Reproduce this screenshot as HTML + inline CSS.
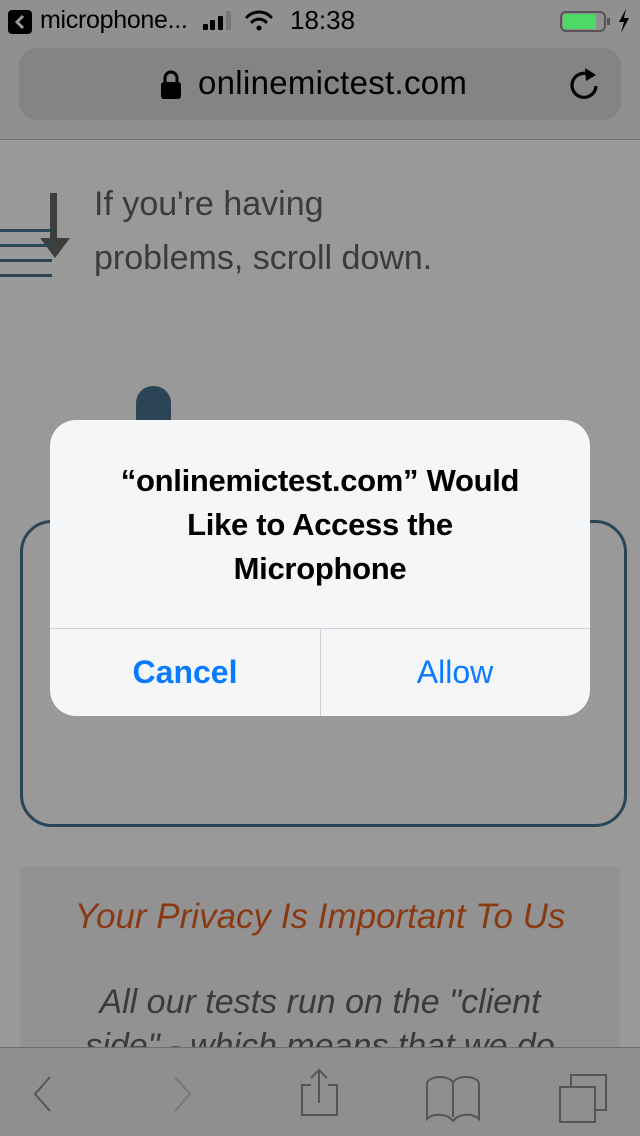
<!DOCTYPE html>
<html><head><meta charset="utf-8"><style>
*{margin:0;padding:0;box-sizing:border-box}
body{width:640px;height:1136px;overflow:hidden;background:#999;font-family:"Liberation Sans",sans-serif;position:relative}
.abs{position:absolute}
</style></head><body>
<div class="abs" style="left:0;top:0;width:640px;height:140px;background:#918f90;border-bottom:1px solid #6e6e6e"></div>
<!-- status bar -->
<div class="abs" style="left:8px;top:10px;width:24px;height:24px;background:#000;border-radius:4px"></div>
<svg class="abs" style="left:8px;top:10px" width="24" height="24"><path d="M15 6 L9 12 L15 18" stroke="#999" stroke-width="3" fill="none"/></svg>
<div class="abs" style="left:40px;top:6px;font-size:25px;color:#000;letter-spacing:-0.3px">microphone...</div>
<div class="abs" style="left:203px;top:24px;width:5px;height:6px;background:#000;border-radius:1px"></div>
<div class="abs" style="left:210px;top:20px;width:5px;height:10px;background:#000;border-radius:1px"></div>
<div class="abs" style="left:218px;top:16px;width:5px;height:14px;background:#000;border-radius:1px"></div>
<div class="abs" style="left:226px;top:11px;width:5px;height:19px;background:#777;border-radius:1px"></div>
<svg class="abs" style="left:244px;top:8px" width="30" height="24" fill="none" stroke="#000" stroke-width="3" stroke-linecap="round"><path d="M3 9 A17 17 0 0 1 27 9"/><path d="M8 14 A10 10 0 0 1 22 14"/><circle cx="15" cy="20" r="2.5" fill="#000" stroke="none"/></svg>
<div class="abs" style="left:290px;top:5px;font-size:26px;color:#000">18:38</div>
<div class="abs" style="left:560px;top:11px;width:46px;height:21px;border:2px solid #555;border-radius:6px"></div>
<div class="abs" style="left:563px;top:14px;width:33px;height:15px;background:#4cd964;border-radius:2px"></div>
<div class="abs" style="left:607px;top:18px;width:3px;height:7px;background:#555"></div>
<svg class="abs" style="left:616px;top:8px" width="16" height="26"><path d="M10 1 L3 14 H8 L5 25 L13 10 H8 Z" fill="#000"/></svg>
<!-- url bar -->
<div class="abs" style="left:19px;top:48px;width:602px;height:72px;background:#858383;border-radius:18px"></div>
<svg class="abs" style="left:158px;top:70px" width="26" height="30"><rect x="3" y="12" width="20" height="17" rx="3" fill="#000"/><path d="M7 13 V8 A6 6 0 0 1 19 8 V13" stroke="#000" stroke-width="3" fill="none"/></svg>
<div class="abs" style="left:198px;top:64px;font-size:33px;color:#000;letter-spacing:0.3px">onlinemictest.com</div>
<svg class="abs" style="left:568px;top:66px" width="36" height="40"><path d="M28 20 A12 12 0 1 1 20 8" stroke="#000" stroke-width="3.2" fill="none"/><path d="M17 2 L28 9 L18 15 Z" fill="#000"/></svg>
<!-- content -->
<div class="abs" style="left:50px;top:193px;width:7px;height:52px;background:#3e3e3e"></div>
<svg class="abs" style="left:40px;top:238px" width="30" height="24"><path d="M0 0 L30 0 L15 20 Z" fill="#3e3e3e"/></svg>
<div class="abs" style="left:0;top:229px;width:52px;height:3px;background:#2d4656"></div>
<div class="abs" style="left:0;top:244px;width:52px;height:3px;background:#2d4656"></div>
<div class="abs" style="left:0;top:259px;width:52px;height:3px;background:#2d4656"></div>
<div class="abs" style="left:0;top:274px;width:52px;height:3px;background:#2d4656"></div>
<div class="abs" style="left:94px;top:177px;font-size:34px;line-height:54px;color:#3b3b3b">If you're having<br>problems, scroll down.</div>
<div class="abs" style="left:136px;top:386px;width:35px;height:70px;background:#2b4557;border-radius:17px"></div>
<div class="abs" style="left:20px;top:520px;width:607px;height:307px;border:3px solid #2b4557;border-radius:32px"></div>
<div class="abs" style="left:20px;top:867px;width:600px;height:200px;background:#929293"></div>
<div class="abs" style="left:20px;top:897px;width:600px;text-align:center;font-size:35px;font-style:italic;color:#8a3a12">Your Privacy Is Important To Us</div>
<div class="abs" style="left:20px;top:980px;width:600px;text-align:center;font-size:34px;line-height:44px;font-style:italic;color:#3a3a3a">All our tests run on the "client<br>side" - which means that we do</div>
<!-- bottom bar -->
<div class="abs" style="left:0;top:1047px;width:640px;height:89px;background:#8f8f8f;border-top:1px solid #6e6e6e"></div>
<svg class="abs" style="left:0;top:1047px" width="640" height="89" fill="none" stroke-width="2">
<path d="M50 30 L35 47 L50 64" stroke="#555"/>
<path d="M175 30 L190 47 L175 64" stroke="#777"/>
<path d="M311 38 H302 V68 H337 V38 H328" stroke="#555"/>
<path d="M319 56 V23 M311 31 L319 23 L327 31" stroke="#555"/>
<path d="M453 70 V36 C450 28 430 28 427 36 V72 C433 66 447 66 453 74 C459 66 473 66 479 72 V36 C476 28 456 28 453 36" stroke="#555"/>
<rect x="560" y="40" width="35" height="35" stroke="#555"/>
<path d="M571 40 V28 H606 V63 H595" stroke="#555"/>
</svg>
<!-- dialog -->
<div class="abs" style="left:50px;top:420px;width:540px;height:296px;background:#f5f6f8;border-radius:26px;overflow:hidden">
<div style="position:absolute;top:39px;width:100%;text-align:center;font-size:31px;line-height:44px;color:#000;font-weight:bold;letter-spacing:-0.3px">“onlinemictest.com” Would<br>Like to Access the<br>Microphone</div>
<div style="position:absolute;top:208px;left:0;width:100%;height:1px;background:#d0d0d6"></div>
<div style="position:absolute;top:208px;left:270px;width:1px;height:88px;background:#d0d0d6"></div>
<div style="position:absolute;top:234px;left:0;width:270px;text-align:center;font-size:32px;color:#0a7aff;font-weight:bold">Cancel</div>
<div style="position:absolute;top:234px;left:270px;width:270px;text-align:center;font-size:32px;color:#0a7aff">Allow</div>
</div>
</body></html>
